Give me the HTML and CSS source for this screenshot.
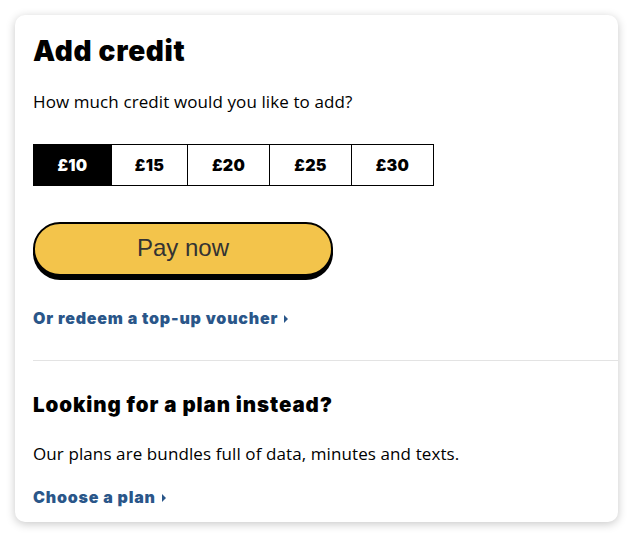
FILE: index.html
```html
<!DOCTYPE html>
<html lang="en">
<head>
<meta charset="utf-8">
<title>Add credit</title>
<link rel="stylesheet" href="styles.css">
</head>
<body>
<main class="card">
  <section class="section">
    <h1 class="title">Add credit</h1>
    <p class="text">How much credit would you like to add?</p>
    <div class="amounts">
      <button class="amount amount--active">£10</button>
      <button class="amount">£15</button>
      <button class="amount">£20</button>
      <button class="amount">£25</button>
      <button class="amount">£30</button>
    </div>
    <button class="pay">Pay now</button>
    <a class="link" href="#">Or redeem a top-up voucher <span class="caret"></span></a>
  </section>
  <hr class="divider">
  <section class="section section--plan">
    <h2 class="subtitle">Looking for a plan instead?</h2>
    <p class="text">Our plans are bundles full of data, minutes and texts.</p>
    <a class="link" href="#">Choose a plan <span class="caret"></span></a>
  </section>
</main>
</body>
</html>
```
FILE: styles.css
```css
* { box-sizing: border-box; }
html, body { margin: 0; padding: 0; background: #fff; }
body {
  padding: 15px;
  font-family: "Open Sans", "Noto Sans", sans-serif;
  color: #000;
}
.card {
  width: 603px;
  height: 507px;
  background: #fff;
  border-radius: 10px;
  box-shadow: 0 2px 10px rgba(0,0,0,0.22);
  overflow: hidden;
}
.section {
  padding: 0 18px;
  display: flex;
  flex-direction: column;
  align-items: flex-start;
}
.title {
  margin: 18px 0 0;
  font-family: "Inter", sans-serif;
  font-size: 28px;
  line-height: 36px;
  font-weight: 900;
  letter-spacing: 0.7px;
}
.text {
  margin: 0;
  font-size: 17px;
  line-height: 22px;
  font-weight: 400;
  letter-spacing: 0.1px;
}
.section > .text { margin-top: 22px; }
.amounts {
  display: grid;
  grid-template-columns: 79px 76px 82px 82px 82px;
  margin-top: 31px;
}
.amount {
  height: 42px;
  border: 1px solid #000;
  border-left: 0;
  background: #fff;
  color: #000;
  font-family: "Inter", sans-serif;
  font-weight: 900;
  font-size: 16px;
  letter-spacing: 0.3px;
  padding: 0;
}
.amount:first-child { border-left: 1px solid #000; }
.amount--active { background: #000; color: #fff; }
.pay {
  margin-top: 36px;
  width: 300px;
  height: 54px;
  border: 2px solid #000;
  border-radius: 27px;
  background: #f3c44b;
  box-shadow: 0 4px 0 #000;
  font-family: "Liberation Sans", Arial, sans-serif;
  font-size: 24px;
  color: #333;
  padding: 0 0 3px;
}
.link {
  margin-top: 31px;
  color: #2a5689;
  font-family: "Inter", sans-serif;
  font-weight: 900;
  font-size: 16px;
  line-height: 22px;
  letter-spacing: 0.8px;
  text-decoration: none;
  display: inline-flex;
  align-items: center;
  gap: 6px;
}
.caret {
  width: 0; height: 0;
  border-top: 4px solid transparent;
  border-bottom: 4px solid transparent;
  border-left: 4px solid #2a5689;
  margin-top: 2px;
}
.divider {
  margin: 31px 0 0 18px;
  border: 0;
  border-top: 1px solid #e3e3e3;
}
.subtitle {
  margin: 31px 0 0;
  font-family: "Inter", sans-serif;
  font-size: 20.5px;
  line-height: 26px;
  font-weight: 900;
  letter-spacing: 0.9px;
}
.section--plan > .text { margin-top: 25px; }
.section--plan > .link { margin-top: 21px; }
```
